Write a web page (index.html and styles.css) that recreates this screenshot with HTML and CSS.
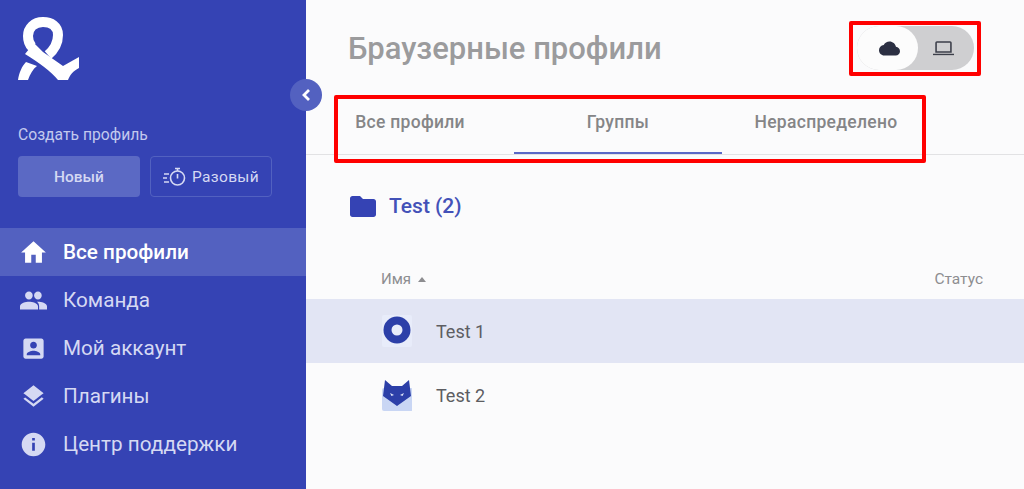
FILE: index.html
```html
<!DOCTYPE html>
<html lang="ru">
<head>
  <meta charset="UTF-8">
  <title>Браузерные профили</title>
  <link rel="stylesheet" href="styles.css">
</head>
<body>
  <div class="app">
    <aside class="sidebar">
      <svg class="logo" viewBox="0 0 62 64">
        <path d="M30 38 C37 32 40 26 40 18 C40 9 33 5 25 5 C16 5 10 11 10 19 C10 23 11 27 14 30" fill="none" stroke="#fff" stroke-width="10"/>
        <path d="M7 37 L16 26 L25 35 L45 49 L61 40 L61 51 C55 54 52 58 50 63 L40 63 C33 54 21 46 7 37 Z" fill="#fff"/>
        <path d="M0 63 L10 63 C12 57 15 52 19 49 L8 45 C4 49 1 56 0 63 Z" fill="#fff"/>
      </svg>
      <p class="create-label">Создать профиль</p>
      <div class="create-btns">
        <div class="btn btn-new">Новый</div>
        <div class="btn btn-once">
          <svg class="timer-icon" viewBox="0 0 24 20" fill="none" stroke="#d5d9f3" stroke-width="1.600">
            <circle cx="14.500" cy="11" r="7"/>
            <path d="M14.500 7v4.500M12 1.500h5M14.500 1.500v2.500M1 7h5M0 11h4M1 15h5"/>
          </svg>
          Разовый
        </div>
      </div>
      <nav class="menu">
        <div class="menu-item active">
          <svg class="menu-icon" viewBox="0 0 24 24"><path d="M10 21v-7h4v7h5.500v-9H23L12 2 1 12h3.500v9z"/></svg>
          Все профили
        </div>
        <div class="menu-item">
          <svg class="menu-icon" viewBox="0 0 24 24"><path d="M16 11c1.900 0 3.300-1.500 3.300-3.500S17.900 4 16 4s-3.500 1.500-3.500 3.500S14.100 11 16 11zm-8 0c1.900 0 3.300-1.500 3.300-3.500S9.900 4 8 4 4.500 5.500 4.500 7.500 6.100 11 8 11zm0 2c-2.800 0-8 1.300-8 4v3h16v-3c0-2.700-5.200-4-8-4zm8 0h-1c1.200.9 2 2.200 2 4v3h7v-3c0-2.700-5.200-4-8-4z"/></svg>
          Команда
        </div>
        <div class="menu-item">
          <svg class="menu-icon" viewBox="0 0 24 24"><path d="M3 5v14c0 1.100.9 2 2 2h14c1.100 0 2-.9 2-2V5c0-1.100-.9-2-2-2H5c-1.100 0-2 .9-2 2zm12 4c0 1.700-1.300 3-3 3s-3-1.300-3-3 1.300-3 3-3 3 1.300 3 3zm-9 8c0-2 4-3.100 6-3.100s6 1.100 6 3.100v1H6z"/></svg>
          Мой аккаунт
        </div>
        <div class="menu-item">
          <svg class="menu-icon" viewBox="0 0 24 24"><path d="M12 18.500l-7.400-5.700L3 14l9 7 9-7-1.600-1.300zM12 16l7.400-5.700L21 9l-9-7-9 7 1.600 1.300z"/></svg>
          Плагины
        </div>
        <div class="menu-item">
          <svg class="menu-icon" viewBox="0 0 24 24"><path d="M12 1.500C6.200 1.500 1.500 6.200 1.500 12S6.200 22.500 12 22.500 22.500 17.800 22.500 12 17.800 1.500 12 1.500zm1.200 16h-2.400v-7h2.400zm0-9h-2.400V6.200h2.400z"/></svg>
          Центр поддержки
        </div>
      </nav>
    </aside>

    <main class="content">
      <header class="topbar">
        <h1 class="title">Браузерные профили</h1>
        <div class="switch">
          <div class="switch-opt on">
            <svg class="switch-icon" viewBox="0 0 24 24"><path d="M19.400 10c-.7-3.400-3.700-6-7.400-6-2.900 0-5.400 1.600-6.600 4C2.300 8.400 0 11 0 14c0 3.300 2.700 6 6 6h13c2.800 0 5-2.200 5-5 0-2.600-2.100-4.800-4.600-5z" fill="#2b2f42"/></svg>
          </div>
          <div class="switch-opt">
            <svg class="switch-icon" viewBox="0 0 24 24"><path d="M3.500 5.500c0-.6.400-1 1-1h15c.6 0 1 .4 1 1V16h-17z" fill="none" stroke="#3c3f4a" stroke-width="1.800"/><path d="M0 18h24v1.600H0z" fill="#3c3f4a"/></svg>
          </div>
        </div>
      </header>

      <div class="tabs">
        <div class="tab">Все профили</div>
        <div class="tab current">Группы</div>
        <div class="tab">Нераспределено</div>
      </div>

      <div class="group">
        <svg class="folder" viewBox="0 0 26 21"><path d="M2.500 0h7.500l3 3h10.500c1.400 0 2.500 1.100 2.500 2.500v13c0 1.400-1.100 2.500-2.500 2.500h-21C1.100 21 0 19.900 0 18.500v-16C0 1.100 1.100 0 2.500 0z" fill="#3543b4"/></svg>
        <span>Test (2)</span>
      </div>

      <div class="table-head">
        <div class="col-name">Имя <span class="sort"></span></div>
        <div class="col-status">Статус</div>
      </div>
      <div class="row selected">
        <div class="browser">
          <svg viewBox="0 0 30 32">
            <rect width="30" height="32" rx="2" fill="#e8ecfa"/>
            <circle cx="15" cy="15" r="9.500" fill="none" stroke="#2c3fa8" stroke-width="8"/>
          </svg>
        </div>
        Test 1
      </div>
      <div class="row">
        <div class="browser">
          <svg viewBox="0 0 30 32">
            <rect y="9" width="31" height="23" rx="2" fill="#c9d6f4"/>
            <path d="M3 1l7 6h10l7-6 2 16-14 10L1 17z" fill="#2c3fa8"/>
            <path d="M8 14l4 2-2.500 1zM22 14l-4 2 2.500 1z" fill="#dfe5f7"/>
          </svg>
        </div>
        Test 2
      </div>
    </main>

    <div class="collapse">
      <svg viewBox="0 0 12 14" fill="none" stroke="#fff" stroke-width="2.800"><path d="M9 2L4 7l5 5"/></svg>
    </div>
    <div class="mark mark-switch"></div>
    <div class="mark mark-tabs"></div>
  </div>
</body>
</html>
```

FILE: styles.css
```css
* {
  box-sizing: border-box;
}
body {
  margin: 0;
  font-family: Roboto, "Liberation Sans", sans-serif;
  background-color: #fbfbfc;
}
.app {
  position: relative;
  display: flex;
  width: 1024px;
  height: 489px;
  overflow: hidden;
}
.sidebar {
  width: 306px;
  flex-shrink: 0;
  background-color: #3543b4;
  padding-top: 17px;
}
.logo {
  display: block;
  width: 62px;
  height: 64px;
  margin-left: 18px;
}
.create-label {
  margin: 45px 0 0 18px;
  font-size: 15.700px;
  line-height: 18px;
  color: #c3c9ee;
}
.create-btns {
  display: flex;
  gap: 10px;
  margin: 12px 0 0 18px;
}
.btn {
  display: flex;
  align-items: center;
  justify-content: center;
  width: 122px;
  height: 41px;
  border-radius: 4px;
  font-size: 15.500px;
  font-weight: 500;
  color: #d5d9f3;
}
.btn-new {
  background-color: #5b69c4;
}
.btn-once {
  border: 1px solid #5261c0;
  gap: 5px;
  font-weight: 400;
  letter-spacing: 0.3px;
}
.timer-icon {
  width: 24px;
  height: 20px;
}
.menu {
  margin-top: 31px;
}
.menu-item {
  display: flex;
  align-items: center;
  gap: 16px;
  height: 48px;
  padding-left: 20px;
  font-size: 20.700px;
  color: #d5d9f3;
}
.menu-item.active {
  background-color: #5361c0;
  color: #fff;
  font-weight: 500;
}
.menu-icon {
  width: 27px;
  height: 27px;
  fill: #d5d9f3;
}
.active .menu-icon {
  fill: #fff;
}
.content {
  flex: 1;
  min-width: 0;
}
.topbar {
  display: flex;
  align-items: center;
  justify-content: space-between;
  height: 96px;
  padding: 0 50px 0 42px;
}
.title {
  margin: 0;
  font-size: 31px;
  font-weight: 500;
  color: #9b9b9d;
}
.switch {
  display: flex;
  width: 117px;
  height: 44px;
  border-radius: 22px;
  background-color: #cfcfd1;
}
.switch-opt {
  display: flex;
  align-items: center;
  justify-content: center;
  width: 50px;
  height: 44px;
}
.switch-opt.on {
  width: 61px;
  padding-left: 3px;
  border-radius: 22px;
  background-color: #fcfcfc;
}
.switch-icon {
  width: 21px;
  height: 21px;
}
.tabs {
  display: flex;
  height: 59px;
  border-bottom: 1px solid #e2e2e4;
}
.tab {
  width: 208px;
  height: 58px;
  padding-top: 16px;
  text-align: center;
  font-size: 17.500px;
  line-height: 20px;
  font-weight: 500;
  letter-spacing: 0.3px;
  color: #858587;
}
.tab.current {
  border-bottom: 2px solid #5a68c6;
}
.group {
  display: flex;
  align-items: center;
  gap: 13px;
  height: 22px;
  margin: 40px 0 0 44px;
  font-size: 21px;
  font-weight: 500;
  color: #4351b8;
}
.folder {
  width: 26px;
  height: 21px;
}
.table-head {
  display: flex;
  justify-content: space-between;
  align-items: center;
  height: 20px;
  margin-top: 52px;
  padding: 0 41px 0 75px;
  font-size: 15px;
  color: #8d8d90;
}
.col-status {
  font-size: 15.500px;
}
.sort {
  display: inline-block;
  margin-left: 3px;
  vertical-align: 2px;
  border: 4.500px solid transparent;
  border-top: 0;
  border-bottom: 5px solid #8d8d90;
}
.row {
  display: flex;
  align-items: center;
  gap: 24px;
  height: 64px;
  padding-left: 76px;
  font-size: 18px;
  color: #5d5d62;
}
.table-head + .row {
  margin-top: 10px;
}
.row.selected {
  background-color: #e2e5f4;
}
.browser svg {
  display: block;
  width: 30px;
  height: 32px;
}
.collapse {
  position: absolute;
  left: 290px;
  top: 79px;
  display: flex;
  align-items: center;
  justify-content: center;
  width: 32px;
  height: 32px;
  border-radius: 50%;
  background-color: #5361c0;
}
.collapse svg {
  width: 12px;
  height: 14px;
}
.mark {
  position: absolute;
  border: 4px solid #f00;
  border-radius: 2px;
}
.mark-switch {
  left: 849px;
  top: 21px;
  width: 132px;
  height: 55px;
}
.mark-tabs {
  left: 334px;
  top: 95px;
  width: 592px;
  height: 68px;
}
```
